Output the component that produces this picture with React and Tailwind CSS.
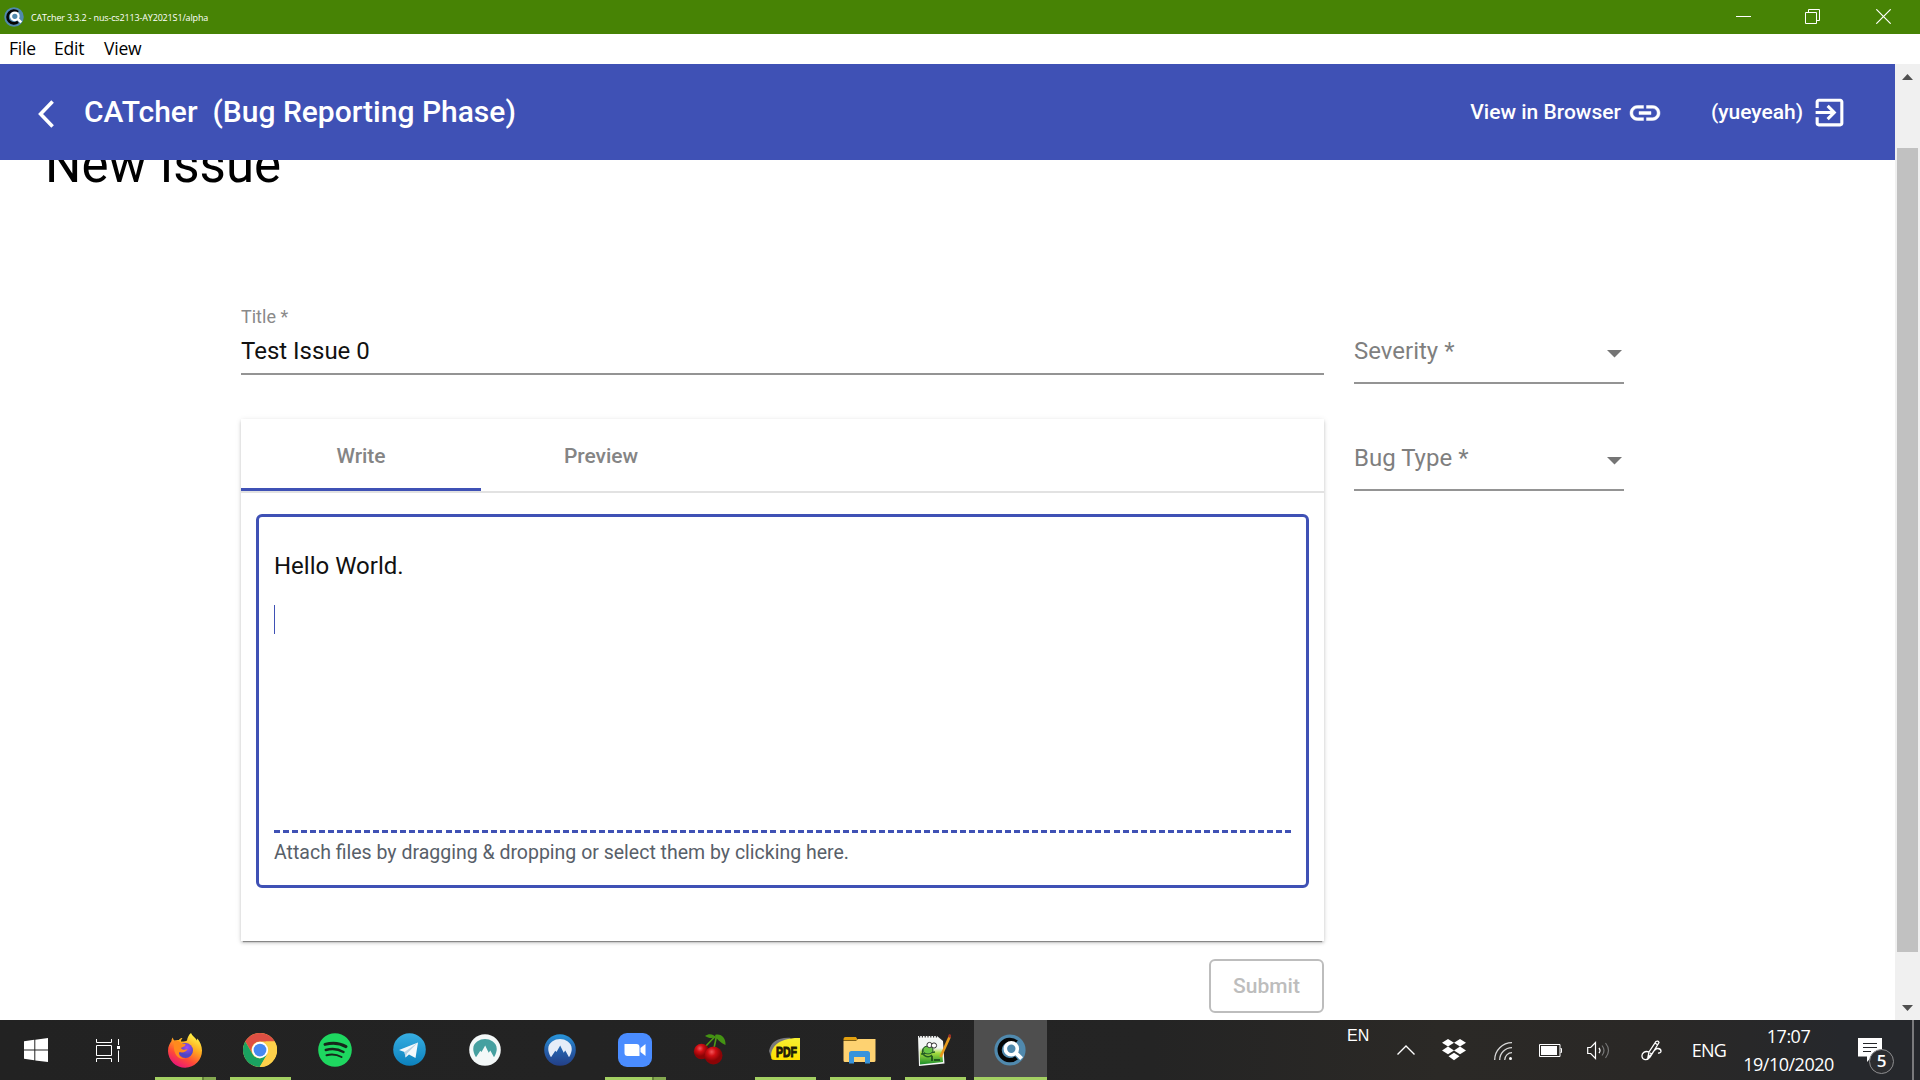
import React from "react";

const SEGOE = "font-['Open_Sans','Noto_Sans',sans-serif]";

function CatcherLogo({ size }) {
  return (
    <svg width={size} height={size} viewBox="0 0 32 32">
      <circle cx="16" cy="16" r="15.6" fill="#5089ad" />
      <path d="M22.4 8.2A10.2 10.2 0 1 0 22.4 23.8" fill="none" stroke="#050505" strokeWidth="4.2" />
      <circle cx="17.3" cy="14.8" r="6" fill="none" stroke="#fff" strokeWidth="3.6" />
      <path d="M21.6 18.6L27.6 24.6" stroke="#fff" strokeWidth="4" />
    </svg>
  );
}

function TitleBar() {
  return (
    <div className="flex h-[34px] items-center bg-[#478305] pl-1 text-white">
      <CatcherLogo size={20} />
      <span className={`${SEGOE} ml-[7px] whitespace-pre text-[9px] leading-[35px] tracking-[-0.15px]`}>
        CATcher 3.3.2 - nus-cs2113-AY2021S1/alpha
      </span>
      <div className="ml-auto flex items-center">
        <svg className="mr-[54px]" width="15" height="15" viewBox="0 0 15 15">
          <path d="M0 6.5H15" stroke="#fff" />
        </svg>
        <svg className="mb-px mr-14" width="15" height="15" viewBox="0 0 15 15" fill="none" stroke="#fff">
          <path d="M.5 3.5h11v11H.5zM3.5 3.5v-3h11v11h-3" />
        </svg>
        <svg className="mb-px mr-[29px]" width="15" height="15" viewBox="0 0 15 15" fill="none" stroke="#fff" strokeWidth="1.2">
          <path d="M.3.3l14.4 14.4M14.7.3L.3 14.7" />
        </svg>
      </div>
    </div>
  );
}

function MenuBar() {
  return (
    <div className={`${SEGOE} flex h-[30px] bg-white pl-[9px] text-[17.5px] leading-[29px] tracking-[-0.2px] text-black`}>
      <span className="w-[45px]">File</span>
      <span className="w-[50px]">Edit</span>
      <span>View</span>
    </div>
  );
}

function Toolbar() {
  return (
    <header className="relative z-10 flex h-24 shrink-0 items-center bg-[#3f51b5] pl-[38px] font-medium text-white">
      <svg className="mt-1" width="16" height="28" viewBox="0 0 16 28" fill="none" stroke="#fff" strokeWidth="3.6">
        <path d="M14.6 1.6L2.6 14L14.6 26.4" />
      </svg>
      <h1 className="ml-[30px] whitespace-pre text-[30px] leading-[96px]">CATcher  (Bug Reporting Phase)</h1>
      <div className="ml-auto flex items-center text-[21px]">
        <span className="mt-px">View in Browser</span>
        <svg className="ml-[6px] mt-[2px]" width="36" height="36" viewBox="0 0 24 24" fill="#fff" stroke="#fff" strokeWidth=".3">
          <path d="M3.9 12c0-1.71 1.39-3.1 3.1-3.1h4V7H7c-2.76 0-5 2.24-5 5s2.24 5 5 5h4v-1.9H7c-1.71 0-3.1-1.39-3.1-3.1zM8 13h8v-2H8v2zm9-6h-4v1.9h4c1.71 0 3.1 1.39 3.1 3.1s-1.39 3.1-3.1 3.1h-4V17h4c2.76 0 5-2.24 5-5s-2.24-5-5-5z" />
        </svg>
        <span className="ml-12 mt-px">(yueyeah)</span>
        <svg className="ml-2 mr-[47px] mt-px" width="37" height="37" viewBox="0 0 24 24" fill="#fff">
          <path d="M10.09 15.59L11.5 17l5-5-5-5-1.41 1.41L12.67 11H3v2h9.67l-2.58 2.59zM19 3H5c-1.11 0-2 .9-2 2v4h2V5h14v14H5v-4H3v4c0 1.1.89 2 2 2h14c1.1 0 2-.9 2-2V5c0-1.1-.9-2-2-2z" />
        </svg>
      </div>
    </header>
  );
}

function SelectField({ label, className }) {
  return (
    <div className={`flex w-[270px] items-start justify-between border-b-2 border-[#949494] pr-[2px] ${className}`}>
      <span className="text-[24px] leading-[30px] text-[#7f7f7f]">{label}</span>
      <svg className="mt-[14px]" width="15" height="8" viewBox="0 0 15 8">
        <path d="M0 0h15L7.5 7.5z" fill="#757575" />
      </svg>
    </div>
  );
}

function IssueForm() {
  return (
    <div className="flex pl-[241px]">
      <div className="flex w-[1083px] flex-col">
        <label className="h-[26px] text-[18px] leading-[27px] text-[#8a8a8a]">Title *</label>
        <div className="h-[46px] border-b-2 border-[#949494] pt-[7px] text-[24px] leading-[30px] text-[#111]">Test Issue 0</div>

        <section className="mt-11 h-[522px] bg-white shadow-[0_3px_1px_-2px_rgba(0,0,0,0.35),0_2px_3px_0_rgba(0,0,0,0.16),0_1px_6px_0_rgba(0,0,0,0.1)]">
          <div className="flex h-[74px] border-b-2 border-[#e2e2e2] text-center text-[21px] font-medium leading-[74px] tracking-[-0.05px] text-[#858585]">
            <div className="h-[72px] w-60 border-b-[3px] border-[#3f51b5]">Write</div>
            <div className="w-60">Preview</div>
          </div>
          <div className="mx-[15px] mt-[21px] flex h-[374px] flex-col rounded-md border-[3px] border-[#3f51b5] px-[15px]">
            <div className="mt-[34px] text-[24px] leading-[30px] text-[#111]">Hello World.</div>
            <div className="mt-[24px] h-[29px] w-px bg-[#3f51b5]" />
            <div className="mt-[196px] h-[3px] w-[1017px] bg-[repeating-linear-gradient(90deg,#3f51b5_0_6px,transparent_6px_9.027px)]" />
            <div className="mt-[6px] text-[19.5px] leading-[28px] text-[#586069]">
              Attach files by dragging &amp; dropping or select them by clicking here.
            </div>
          </div>
        </section>

        <button className="mt-[18px] h-[54px] w-[115px] self-end rounded-md border-2 border-[#bdbdbd] text-[21px] font-medium leading-[51px] text-[#bdbdbd]">
          Submit
        </button>
      </div>
      <div className="ml-[30px] pt-[33px]">
        <SelectField label="Severity *" className="h-[48px]" />
        <SelectField label="Bug Type *" className="mt-[59px] h-[48px]" />
      </div>
    </div>
  );
}

function Scrollbar() {
  return (
    <div className="flex w-[25px] flex-col items-center bg-[#f0f0f0]">
      <svg className="mt-[10px]" width="11" height="6" viewBox="0 0 11 6">
        <path d="M0 6h11L5.5 0z" fill="#505050" />
      </svg>
      <div className="mt-[68px] h-[804px] w-[21px] bg-[#c1c1c1]" />
      <svg className="mt-[53px]" width="11" height="6" viewBox="0 0 11 6">
        <path d="M0 0h11L5.5 6z" fill="#505050" />
      </svg>
    </div>
  );
}

function Firefox() {
  return (
    <svg width="36" height="36" viewBox="0 0 36 36">
      <defs>
        <linearGradient id="ff-a" x1=".8" y1=".1" x2=".3" y2="1">
          <stop offset="0" stopColor="#fff044" />
          <stop offset=".35" stopColor="#ffa61e" />
          <stop offset=".68" stopColor="#ff4a37" />
          <stop offset="1" stopColor="#e8127c" />
        </linearGradient>
        <radialGradient id="ff-b" cx=".6" cy=".3">
          <stop offset="0" stopColor="#a24bf5" />
          <stop offset="1" stopColor="#4f45c4" />
        </radialGradient>
      </defs>
      <path d="M24 1c1 3 4.500 4.500 6 7.500 0-.8 0-1.500.3-2C33 9.500 35 14 35 18.500A17 17 0 0 1 1 19c0-5 2-8 3.500-10 0-1.500.5-2.800 1.300-3.600.2 1.600 1 2.600 2 3.200 1.300-.5 2.600-.7 4-.5C13 6.500 14 6 15.500 6c-1.200 1.500-1.500 2.500-1.500 3.500 2 .2 4.500 0 6-1C20.500 5.500 21.500 3 24 1z" fill="url(#ff-a)" />
      <circle cx="18.500" cy="18.500" r="7.500" fill="url(#ff-b)" />
      <path d="M7 9c3-1 6 0 8 3h3.500c.5 2-2.500 3-4.500 4 1 2 3.500 2.200 6.500 1-1 3-5 4-8 3-2 3 2 6.500 6 6.500-8 2-13-5-11.500-17.500z" fill="#ff8a1d" />
    </svg>
  );
}

function Chrome() {
  return (
    <svg width="34" height="34" viewBox="0 0 48 48">
      <circle cx="24" cy="24" r="24" fill="#fdd04a" />
      <path d="M24 0a24 24 0 0 1 20.800 12H24a12 12 0 0 0-10.400 18L3.200 12A24 24 0 0 1 24 0z" fill="#dd4f43" />
      <path d="M3.200 12l10.400 18A12 12 0 0 0 24 36h.0l10-6-10.400 18A24 24 0 0 1 3.200 12z" fill="#1aa260" />
      <path d="M23.600 48L34.400 30A12 12 0 0 0 34 17l-2-5h12.800A24 24 0 0 1 23.600 48z" fill="#fdd04a" />
      <circle cx="24" cy="24" r="11.500" fill="#fff" />
      <circle cx="24" cy="24" r="9" fill="#4688f1" />
    </svg>
  );
}

function Spotify() {
  return (
    <svg width="34" height="34" viewBox="0 0 34 34" fill="none" stroke="#16271b" strokeLinecap="round">
      <circle cx="17" cy="17" r="16.800" fill="#1ed760" stroke="none" />
      <path d="M7 11.400c7-2 15-1.300 21 2.200" strokeWidth="3" />
      <path d="M7.800 17c6-1.700 12.500-1 17.700 2" strokeWidth="2.500" />
      <path d="M8.500 22.200c5-1.300 10.500-.7 15 1.800" strokeWidth="2" />
    </svg>
  );
}

function Telegram() {
  return (
    <svg width="33" height="33" viewBox="0 0 33 33">
      <defs>
        <linearGradient id="tg" x2="0" y2="1">
          <stop stopColor="#37aee2" />
          <stop offset="1" stopColor="#0c81bd" />
        </linearGradient>
      </defs>
      <circle cx="16.500" cy="16.500" r="16.300" fill="url(#tg)" />
      <path d="M6 17L25 9.500 22.500 25 16 21.500 12.500 24.500 11.500 19z" fill="#f4f8fb" />
      <path d="M11.500 19L25 9.500 14 20.500 12.500 24.500z" fill="#b9d3e4" />
    </svg>
  );
}

function Nord({ light }) {
  return (
    <svg width="32" height="32" viewBox="0 0 32 32">
      <defs>
        <linearGradient id="nord-blue" x2="0" y2="1">
          <stop stopColor="#2896dc" />
          <stop offset=".5" stopColor="#2560ab" />
          <stop offset="1" stopColor="#233f87" />
        </linearGradient>
      </defs>
      <circle cx="16" cy="16" r="15.800" fill={light ? "#f3f8f8" : "url(#nord-blue)"} />
      <path
        d="M7 23.200C-.5 11 9 5 16 5s16.500 6 9 18.200L21.300 16.500l-1.600 2.300-3.500-7.300-3.700 6.500-1.200-1.300z"
        fill={light ? "#45a0a0" : "#e5edf8"}
      />
    </svg>
  );
}

function Zoom() {
  return (
    <svg width="34" height="34" viewBox="0 0 34 34">
      <rect width="34" height="34" rx="9" fill="#4a8cff" />
      <path d="M6.500 11h12a3 3 0 0 1 3 3v9h-12a3 3 0 0 1-3-3zM22.500 15l5-4v12l-5-4z" fill="#fff" />
    </svg>
  );
}

function Cherry() {
  return (
    <svg width="34" height="34" viewBox="0 0 34 34">
      <defs>
        <radialGradient id="cherry" cx=".4" cy=".3">
          <stop stopColor="#f3565a" />
          <stop offset=".45" stopColor="#d10f14" />
          <stop offset="1" stopColor="#8b0406" />
        </radialGradient>
      </defs>
      <path d="M12 14L22 3.500M21 15L23.500 3" stroke="#4d9a16" strokeWidth="1.600" />
      <path d="M12 3c4-3 8-2 11 1-4 2-8 1-11-1zM22 2c6-2 11 3 10.500 10C27 9 24 7 22 2z" fill="#449313" />
      <circle cx="8.500" cy="18.500" r="7.700" fill="url(#cherry)" />
      <circle cx="20.500" cy="22.500" r="9" fill="url(#cherry)" />
    </svg>
  );
}

function Pdf() {
  return (
    <svg className="mb-[2px] overflow-visible" width="31" height="24" viewBox="0 0 31 24">
      <defs>
        <linearGradient id="pdf" x2="0" y2="1">
          <stop stopColor="#f6ef32" />
          <stop offset="1" stopColor="#ffe000" />
        </linearGradient>
      </defs>
      <path d="M0 14C2 5 9 0 22 1L6 14 2 20z" fill="#77777a" />
      <path d="M2.500 22C0 11 9 .5 31 1v22H6q-3 0-3.500-1z" fill="url(#pdf)" />
      <text x="7" y="19.500" fontFamily="Liberation Sans, sans-serif" fontWeight="700" fontSize="14" textLength="21" lengthAdjust="spacingAndGlyphs" fill="#1c1b08" stroke="#1c1b08" strokeWidth="1">PDF</text>
    </svg>
  );
}

function Folder() {
  return (
    <svg width="33" height="28" viewBox="0 0 33 28">
      <path d="M.5 3a2 2 0 0 1 2-2H13l2 3.500H.5z" fill="#e2a00f" />
      <path d="M.5 5H13l2-2h17.500v21.500a1.500 1.500 0 0 1-1.500 1.500H2a1.500 1.500 0 0 1-1.500-1.500z" fill="#fed271" />
      <path d="M6 27.500V17.500a2.500 2.500 0 0 1 2.500-2.500h16a2.500 2.500 0 0 1 2.500 2.500V27.500h-5V21H11v6.500z" fill="#3793dc" />
    </svg>
  );
}

function NotepadPP() {
  return (
    <svg className="-ml-[2px]" width="34" height="34" viewBox="0 0 34 34">
      <defs>
        <linearGradient id="npp" x2="0" y2="1">
          <stop offset=".35" stopColor="#f2f6f4" />
          <stop offset=".55" stopColor="#a6dc3f" />
          <stop offset="1" stopColor="#188c2a" />
        </linearGradient>
      </defs>
      <path d="M1 3h19l6 5 1.500 22.500L2 33z" fill="#f5f7f6" />
      <path d="M2.500 6H20l4.500 4 1.500 19-23 2.500z" fill="url(#npp)" />
      <path d="M2 3.500h18" stroke="#333" strokeWidth="2" strokeDasharray="1.200 1.600" />
      <path d="M13 14a5.500 5 0 1 0 2 8M4 21l14-2" fill="none" stroke="#215c22" strokeWidth="1.500" />
      <ellipse cx="11" cy="17" rx="5" ry="4" fill="#69c546" stroke="#27552c" />
      <circle cx="12.500" cy="12" r="2.600" fill="#fff" stroke="#333" />
      <circle cx="17" cy="12.500" r="2.600" fill="#fff" stroke="#333" />
      <path d="M15 23v5M17 27h6" stroke="#123f17" strokeWidth="1.500" />
      <path d="M33 3L23.500 24" stroke="#e79a1d" strokeWidth="2.600" />
      <path d="M33.300 1.500l-1 3" stroke="#9b3126" strokeWidth="2.800" />
    </svg>
  );
}

const APPS = [
  { icon: <Firefox />, run: "stack" },
  { icon: <Chrome />, run: "single" },
  { icon: <Spotify /> },
  { icon: <Telegram /> },
  { icon: <Nord light /> },
  { icon: <Nord /> },
  { icon: <Zoom />, run: "stack" },
  { icon: <Cherry /> },
  { icon: <Pdf />, run: "single" },
  { icon: <Folder />, run: "single" },
  { icon: <NotepadPP />, run: "single" },
  { icon: <CatcherLogo size={32} />, run: "active" },
];

function TaskButton({ icon, run }) {
  return (
    <div className={`flex h-[60px] w-[73px] flex-col items-center ${run === "active" ? "bg-[#4e4e4e]" : ""}`}>
      <div className="flex h-[57px] items-center justify-center pr-[2px] pt-[2px]">{icon}</div>
      {run === "stack" && (
        <div className="flex h-[3px] w-[61px]">
          <div className="w-[47px] bg-[#a3cf62]" />
          <div className="w-[2px] bg-[#64823b]" />
          <div className="w-3 bg-[#84a850]" />
        </div>
      )}
      {run === "single" && <div className="h-[3px] w-[61px] bg-[#a3cf62]" />}
      {run === "active" && <div className="h-[3px] w-full bg-[#a3cf62]" />}
    </div>
  );
}

function Tray() {
  return (
    <div className={`${SEGOE} ml-auto flex h-[60px] items-center text-[16.5px] text-white`}>
      <span className="w-[46px] self-start pl-[13px] font-['Liberation_Sans',sans-serif] text-[16px] leading-[31px]">EN</span>
      <div className="flex w-[52px] justify-center">
        <svg width="18" height="10" viewBox="0 0 18 10" fill="none" stroke="#fff" strokeWidth="1.400">
          <path d="M.5 9.500L9 1l8.500 8.500" />
        </svg>
      </div>
      <div className="flex w-[44px] justify-center">
        <svg width="24" height="22" viewBox="0 0 24 22" fill="#fff">
          <path d="M6 0l6 3.800-6 3.800L0 3.800zM18 0l6 3.800-6 3.800-6-3.800zM6 7.600l6 3.800-6 3.800-6-3.800zM18 7.600l6 3.800-6 3.800-6-3.800zM12 13.800l5.500 3.500L12 21.200l-5.500-3.900z" />
        </svg>
      </div>
      <div className="flex w-[54px] justify-center pt-[2px]">
        <svg width="18" height="18" viewBox="0 0 18 18" fill="none" stroke="#d8d8d8" strokeWidth="1.300">
          <path d="M.7 18A17.300 17.300 0 0 1 18 .7M5.700 18A12.300 12.300 0 0 1 18 5.700M10.700 18A7.300 7.300 0 0 1 18 10.700" />
          <circle cx="16.500" cy="16.500" r="1.500" fill="#fff" stroke="none" />
        </svg>
      </div>
      <div className="flex w-[41px] justify-center">
        <svg width="23" height="13" viewBox="0 0 23 13">
          <path d="M.5.5h20.500v12H.5zM21.500 4.500H22.500v4h-1" fill="none" stroke="#fff" />
          <rect x="2" y="2" width="16" height="9" fill="#fff" />
        </svg>
      </div>
      <div className="flex w-[55px] justify-center pt-[1px]">
        <svg width="23" height="19" viewBox="0 0 23 19" fill="none" stroke="#fff" strokeWidth="1.200">
          <path d="M.7 6.500h3L8.500 1.500v16L3.700 12.500h-3zM12 6.800q2 2.700 0 5.400" />
          <path d="M15 4.500q4 5 0 10M18.500 2q6 7.500 0 15" stroke="#777" />
        </svg>
      </div>
      <div className="flex w-[50px] justify-center">
        <svg width="21" height="21" viewBox="0 0 21 21" fill="none" stroke="#fff" strokeWidth="1.300">
          <path d="M7 17L8 12 15 1.500q2-1.300 3 1L11 14zM8 12c-4-1.500-7.500 1-7 4.500s5 4.500 8 .5 4-9 8-8.500 4 5 0 4.500M9 13l2 1M14 3l2.500 1.800" />
        </svg>
      </div>
      <span className="flex w-[66px] justify-center text-[18px] leading-[60px] tracking-[-0.7px]">ENG</span>
      <div className="w-[93px] whitespace-nowrap text-center text-[18px] leading-[28px] tracking-[-0.5px]">
        <div>17:07</div>
        <div>19/10/2020</div>
      </div>
      <div className="flex h-[60px] w-[77px] pl-[23px] pt-[18px]">
        <div className="relative h-9 w-9">
          <svg width="36" height="36" viewBox="0 0 36 36">
            <path d="M0 0h24v18.500H14L9 24v-5.500H0z" fill="#fff" />
            <path d="M5 5.500h14M5 9.500h14M5 13.500h8" stroke="#252629" />
            <circle cx="23.500" cy="23.500" r="12" fill="#2c2d30" stroke="#8e8e90" />
          </svg>
          <span className="absolute left-[18px] top-[12px] w-[11px] text-center text-[17px] font-semibold leading-[22px]">5</span>
        </div>
      </div>
      <div className="h-[60px] w-[8px] border-l-2 border-[#7a7a7c]" />
    </div>
  );
}

function Taskbar() {
  return (
    <footer className="flex h-[60px] bg-[linear-gradient(90deg,#222222_0%,#242424_60%,#2b2926_75%,#2a2826_86%,#26282c_96%)]">
      <div className="flex w-[72px] items-center justify-center">
        <svg width="24" height="24" viewBox="0 0 24 24" fill="#fff">
          <path d="M0 3.300L10.300 1.800V11.500H0zM11.300 1.700L24 0v11.500H11.300zM0 12.500h10.300v9.800L0 20.800zM11.300 12.500H24V24l-12.700-1.600z" />
        </svg>
      </div>
      <div className="flex w-[77px] items-center pl-6">
        <svg width="25" height="23" viewBox="0 0 25 23" fill="none" stroke="#fff">
          <path d="M.5 0v3.500h15V0M.5 6.500h15v10H.5zM.5 23v-3.500h15V23M22.500 0v6M22.500 11.500V23" />
          <rect x="21" y="7" width="3" height="3" fill="#fff" stroke="none" />
        </svg>
      </div>
      <div className="flex gap-[2px]">
        {APPS.map((app, i) => (
          <TaskButton key={i} {...app} />
        ))}
      </div>
      <Tray />
    </footer>
  );
}

export default function App() {
  return (
    <div className="flex h-[1080px] w-[1920px] flex-col overflow-hidden bg-white font-['Roboto',sans-serif]">
      <TitleBar />
      <MenuBar />
      <div className="flex h-[956px]">
        <main className="flex w-[1895px] flex-col overflow-hidden bg-white">
          <Toolbar />
          <h2 className="-mt-[25px] mb-[108px] ml-[45px] h-[60px] text-[51px] leading-[60px] text-black">New Issue</h2>
          <IssueForm />
        </main>
        <Scrollbar />
      </div>
      <Taskbar />
    </div>
  );
}
